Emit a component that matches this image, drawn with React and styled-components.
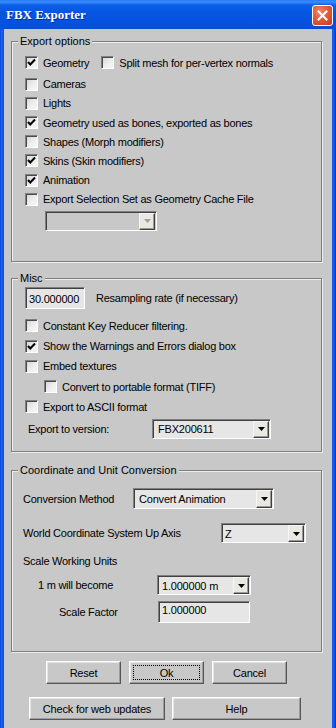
import React from 'react';
import styled, { createGlobalStyle } from 'styled-components';

const GlobalStyle = createGlobalStyle`
  html, body {
    margin: 0;
    padding: 0;
    background: #c8c8c8;
  }
  body {
    font-family: "Liberation Sans", Arial, sans-serif;
    font-size: 11px;
    color: #000;
  }
`;

const FACE = '#c8c8c8';

const Window = styled.div`
  width: 336px;
  height: 728px;
  display: flex;
  flex-direction: column;
  background: linear-gradient(90deg, #0831d9 0, #166aee 1px, #0a58e0 3px, #0a58e0 332px, #166aee 334px, #0831d9 335px);
  overflow: hidden;
`;

const TitleBar = styled.div`
  height: 29px;
  flex: 0 0 29px;
  display: flex;
  align-items: center;
  justify-content: space-between;
  padding: 0 3px 0 6px;
  background: linear-gradient(180deg, #2a7cf5 0, #3c8cff 2px, #0b5fe8 5px, #0553e0 14px, #0452df 22px, #0a4ed8 27px, #0a49cc 29px);
`;

const Title = styled.span`
  font-family: "Liberation Serif", "Times New Roman", serif;
  font-weight: bold;
  font-size: 13px;
  color: #fff;
  text-shadow: 1px 1px 0 #0a2a9a;
  margin-top: 1px;
`;

const CloseButton = styled.div`
  width: 19px;
  height: 19px;
  border: 1px solid #fff;
  border-radius: 3px;
  background: radial-gradient(circle at 35% 30%, #f2836a 0, #e25b3c 45%, #c8381a 100%);
  display: flex;
  align-items: center;
  justify-content: center;
  margin-top: 2px;
`;

const Body = styled.div`
  flex: 1;
  margin: 0 4px;
  background: ${FACE};
  padding: 12px 0 0 7px;
  display: flex;
  flex-direction: column;
`;

const Group = styled.div`
  position: relative;
  width: 311px;
  height: ${p => p.$h}px;
  margin-top: ${p => p.$mt || 0}px;
  box-sizing: border-box;
  border: 1px solid #7e7e7e;
  box-shadow: 1px 1px 0 #ececec, inset 1px 1px 0 #ececec;
  padding-left: ${p => p.$pl || 13}px;
  display: flex;
  flex-direction: column;
`;

const Caption = styled.span`
  position: absolute;
  top: -7px;
  left: 6px;
  padding: 0 2px;
  background: ${FACE};
  line-height: 13px;
`;

const Row = styled.div`
  display: flex;
  align-items: center;
  height: ${p => p.$h}px;
  margin-top: ${p => p.$mt || 0}px;
  padding-left: ${p => p.$indent || 0}px;
  flex: 0 0 auto;
`;

const CheckBox = styled.span`
  width: 13px;
  height: 13px;
  box-sizing: border-box;
  border: 1px solid;
  border-color: #808080 #ffffff #ffffff #808080;
  box-shadow: inset 1px 1px 0 #4a4a4a;
  background: linear-gradient(135deg, #d6d6d6 0, #efefef 60%, #f6f6f6 100%);
  display: flex;
  align-items: center;
  justify-content: center;
  margin-right: 5px;
  margin-left: ${p => p.$ml || 0}px;
  flex: 0 0 13px;
`;

const Label = styled.span`
  letter-spacing: -0.25px;
  white-space: nowrap;
  width: ${p => (p.$w ? `${p.$w}px` : 'auto')};
  margin-left: ${p => p.$ml || 0}px;
  flex: 0 0 auto;
`;

const Field = styled.div`
  width: ${p => p.$w}px;
  height: ${p => p.$h}px;
  box-sizing: border-box;
  border: 1px solid;
  border-color: #808080 #ffffff #ffffff #808080;
  box-shadow: inset 1px 1px 0 #404040;
  background: ${p => (p.$disabled ? FACE : '#e6e6e6')};
  display: flex;
  align-items: ${p => p.$align || 'center'};
  padding: ${p => p.$pad || '0 0 0 3px'};
  flex: 0 0 auto;
`;

const FieldText = styled.span`
  flex: 1;
  letter-spacing: -0.2px;
  white-space: nowrap;
  padding-top: 1px;
`;

const ArrowBtn = styled.span`
  width: 16px;
  height: ${p => p.$h}px;
  box-sizing: border-box;
  margin: 1px 1px 0 0;
  align-self: flex-start;
  border: 1px solid;
  border-color: #f6f6f6 #404040 #404040 #f6f6f6;
  box-shadow: inset -1px -1px 0 #9a9a9a;
  background: #e9e9e2;
  display: flex;
  align-items: center;
  justify-content: center;
`;

const ButtonRow = styled.div`
  display: flex;
  gap: ${p => p.$gap}px;
  margin-top: ${p => p.$mt}px;
  padding-left: ${p => p.$pl}px;
`;

const Button = styled.div`
  width: ${p => p.$w}px;
  height: 23px;
  box-sizing: border-box;
  border: 1px solid;
  border-color: #ffffff #555555 #555555 #ffffff;
  box-shadow: inset -1px -1px 0 #9c9c9c, inset 1px 1px 0 #e6e6e6;
  background: ${FACE};
  display: flex;
  align-items: center;
  justify-content: center;
  letter-spacing: -0.2px;
`;

const FocusRing = styled.span`
  flex: 1;
  align-self: stretch;
  margin: 3px;
  border: 1px dotted #000;
  display: flex;
  align-items: center;
  justify-content: center;
`;

const Check = ({ on, ml }) => (
  <CheckBox $ml={ml}>
    {on && (
      <svg width="9" height="9" viewBox="0 0 9 9">
        <polyline points="1,4 3.3,6.5 8,1.5" fill="none" stroke="#000" strokeWidth="2" />
      </svg>
    )}
  </CheckBox>
);

const Arrow = ({ disabled }) => (
  <svg width="7" height="4" viewBox="0 0 7 4">
    <polygon points="0,0 7,0 3.5,4" fill={disabled ? '#a0a0a0' : '#000'} />
  </svg>
);

const Dropdown = ({ w, h = 20, value, disabled, pad }) => (
  <Field $w={w} $h={h} $disabled={disabled} $pad={pad || '0 0 0 4px'} $align="stretch">
    <FieldText style={{ alignSelf: 'center' }}>{value}</FieldText>
    <ArrowBtn $h={h - 3}>
      <Arrow disabled={disabled} />
    </ArrowBtn>
  </Field>
);

const exportOptions = [
  ['Cameras', false],
  ['Lights', false],
  ['Geometry used as bones, exported as bones', true],
  ['Shapes (Morph modifiers)', false],
  ['Skins (Skin modifiers)', true],
  ['Animation', true],
  ['Export Selection Set as Geometry Cache File', false],
];

const miscOptions = [
  ['Constant Key Reducer filtering.', false, 0],
  ['Show the Warnings and Errors dialog box', true, 0],
  ['Embed textures', false, 0],
  ['Convert to portable format (TIFF)', false, 19],
  ['Export to ASCII format', false, 0],
];

export default function App() {
  return (
    <>
      <GlobalStyle />
      <Window>
        <TitleBar>
          <Title>FBX Exporter</Title>
          <CloseButton>
            <svg width="11" height="11" viewBox="0 0 11 11">
              <path d="M1.5 1.5 L9.5 9.5 M9.5 1.5 L1.5 9.5" stroke="#fff" strokeWidth="2" strokeLinecap="square" />
            </svg>
          </CloseButton>
        </TitleBar>
        <Body>
          <Group $h={221}>
            <Caption>Export options</Caption>
            <Row $h={19.2} $mt={11.4}>
              <Check on />
              <Label>Geometry</Label>
              <Check ml={12} />
              <Label>Split mesh for per-vertex normals</Label>
            </Row>
            {exportOptions.map(([text, on], i) => (
              <Row key={text} $h={19.2} $mt={i === 0 ? 2 : 0}>
                <Check on={on} />
                <Label>{text}</Label>
              </Row>
            ))}
            <Row $h={20} $mt={2} $indent={20}>
              <Dropdown w={112} h={20} disabled value="" />
            </Row>
          </Group>

          <Group $h={174} $mt={16}>
            <Caption>Misc</Caption>
            <Row $h={22} $mt={8}>
              <Field $w={60} $h={22}>
                <FieldText>30.000000</FieldText>
              </Field>
              <Label $ml={11}>Resampling rate (if necessary)</Label>
            </Row>
            {miscOptions.map(([text, on, indent], i) => (
              <Row key={text} $h={20.2} $mt={i === 0 ? 6.9 : 0} $indent={indent}>
                <Check on={on} />
                <Label>{text}</Label>
              </Row>
            ))}
            <Row $h={20} $mt={2} $indent={3}>
              <Label $w={124}>Export to version:</Label>
              <Dropdown w={119} h={20} value="FBX200611" pad="0 0 0 5px" />
            </Row>
          </Group>

          <Group $h={182} $mt={18} $pl={11}>
            <Caption>Coordinate and Unit Conversion</Caption>
            <Row $h={21} $mt={17}>
              <Label $w={110}>Conversion Method</Label>
              <Dropdown w={141} h={21} value="Convert Animation" pad="0 0 0 5px" />
            </Row>
            <Row $h={20} $mt={14}>
              <Label $w={198}>World Coordinate System Up Axis</Label>
              <Dropdown w={85} h={20} value="Z" pad="0 0 0 3px" />
            </Row>
            <Row $h={14} $mt={11}>
              <Label>Scale Working Units</Label>
            </Row>
            <Row $h={20} $mt={7} $indent={15}>
              <Label $w={119}>1 m will become</Label>
              <Dropdown w={94} h={20} value="1.000000 m" />
            </Row>
            <Row $h={22} $mt={6} $indent={36}>
              <Label $w={99}>Scale Factor</Label>
              <Field $w={92} $h={22} $align="flex-start">
                <FieldText style={{ paddingTop: 2 }}>1.000000</FieldText>
              </Field>
            </Row>
          </Group>

          <ButtonRow $gap={8} $mt={9} $pl={35}>
            <Button $w={75}>Reset</Button>
            <Button $w={75}>
              <FocusRing>Ok</FocusRing>
            </Button>
            <Button $w={75}>Cancel</Button>
          </ButtonRow>
          <ButtonRow $gap={7} $mt={13} $pl={18}>
            <Button $w={136}>Check for web updates</Button>
            <Button $w={129}>Help</Button>
          </ButtonRow>
        </Body>
      </Window>
    </>
  );
}
